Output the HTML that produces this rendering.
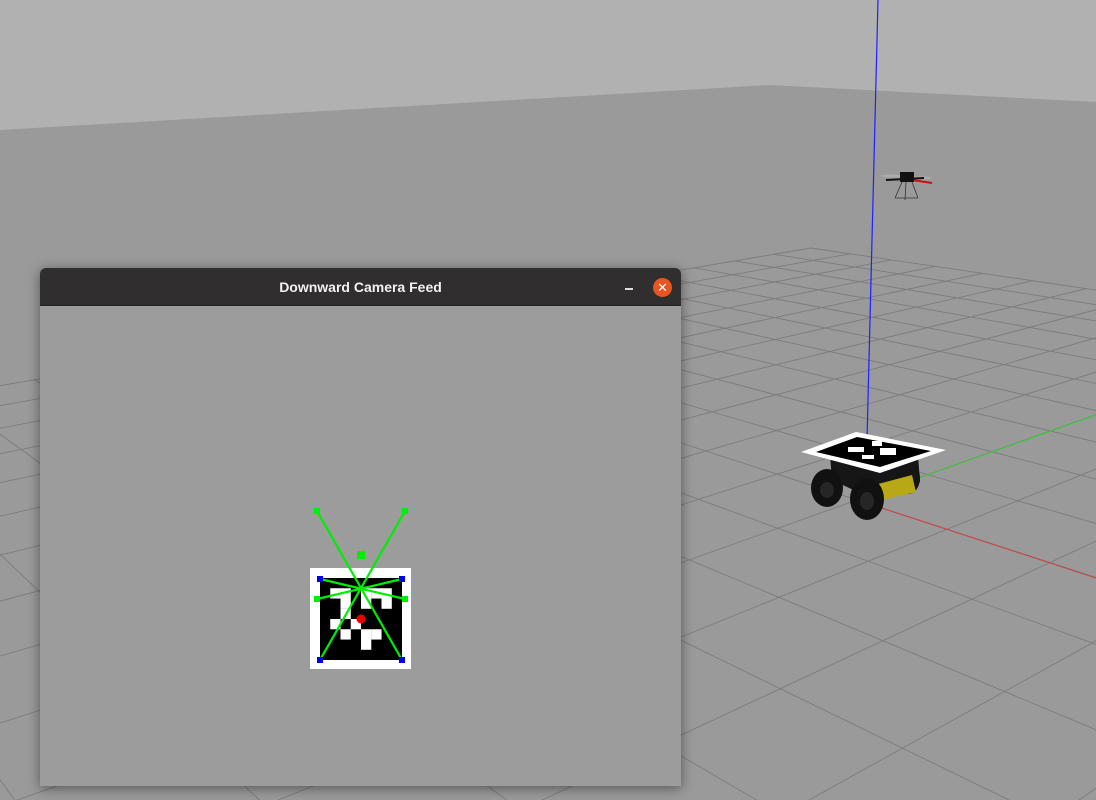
<!DOCTYPE html>
<html><head><meta charset="utf-8"><style>
html,body{margin:0;padding:0;width:1096px;height:800px;overflow:hidden;background:#9a9a9a;font-family:"Liberation Sans",sans-serif}
#scene{position:absolute;left:0;top:0}
#win{position:absolute;left:40px;top:268px;width:641px;height:518px;background:#9c9c9c;box-shadow:0 2px 12px rgba(0,0,0,.45);border-radius:6px 6px 0 0;overflow:hidden}
#tb{height:37px;background:#302e2e;border-bottom:1px solid #242222;color:#f2f2f2;font-weight:bold;font-size:14px;text-align:center;line-height:38px;position:relative}
#min{position:absolute;left:585px;top:20px;width:8px;height:1.5px;background:#ddd}
#cls{position:absolute;left:613px;top:10px;width:19px;height:19px;border-radius:50%;background:#e95420;color:#fff;font-size:13px;line-height:19px;text-align:center;font-weight:normal}
</style></head><body>
<svg id="scene" width="1096" height="800">
<polygon points="0,0 1096,0 1096,102 770,85 0,130" fill="#b1b1b1"/>
<g id="grid" stroke="#7c7c7c" stroke-width="0.9" fill="none"></g>
<line x1="857" y1="500" x2="1096" y2="578" stroke="#d04040" stroke-width="1"/>
<line x1="857" y1="500" x2="1096" y2="415" stroke="#30d030" stroke-width="1"/>
<line x1="878" y1="0" x2="867" y2="440" stroke="#2020ff" stroke-width="1.2"/>
<g>
<ellipse cx="893" cy="176" rx="12" ry="1.5" fill="#bbb" opacity=".6"/>
<ellipse cx="920" cy="178" rx="12" ry="1.5" fill="#bbb" opacity=".6"/>
<line x1="886" y1="180" x2="924" y2="178" stroke="#111" stroke-width="2"/>
<line x1="912" y1="180" x2="932" y2="183" stroke="#d01010" stroke-width="2"/>
<rect x="900" y="172" width="14" height="10" fill="#111"/>
<path d="M902 182 L895 198 M912 182 L918 198 M906 182 L905 200 M895 198 L918 198" stroke="#333" stroke-width=".8"/>
</g>
<g>
<polygon points="830,455 880,468 918,455 920,482 875,500 832,480" fill="#161616"/>
<ellipse cx="908" cy="478" rx="12" ry="16" fill="#151515"/>
<polygon points="878,484 912,475 916,492 882,500" fill="#b8a816"/>
<ellipse cx="827" cy="488" rx="16" ry="19" fill="#111"/>
<ellipse cx="867" cy="499" rx="17" ry="21" fill="#111"/>
<ellipse cx="827" cy="490" rx="7" ry="8" fill="#262626"/>
<ellipse cx="867" cy="501" rx="7" ry="9" fill="#262626"/>
<polygon points="801,452 856,432 946,450 880,473" fill="#fff"/>
<polygon points="816,452 857,437 931,451 880,467" fill="#000"/>
<rect x="848" y="447" width="16" height="5" fill="#fff"/>
<rect x="872" y="441" width="10" height="5" fill="#fff"/>
<rect x="880" y="448" width="16" height="7" fill="#fff"/>
<rect x="862" y="455" width="12" height="4" fill="#fff"/>
</g>
</svg>
<div id="win">
<div id="tb">Downward Camera Feed<div id="min"></div><div id="cls">✕</div></div>
<svg width="641" height="480" style="position:absolute;left:0;top:38px">
<g transform="translate(-40,-306)">
<rect x="310" y="568" width="101" height="101" fill="#fff"/>
<rect x="320" y="578" width="82" height="82" fill="#000"/>
<g fill="#fff" id="cells"></g>
<g stroke="#00ee00" stroke-width="2.2">
<line x1="317" y1="511" x2="402" y2="660"/>
<line x1="405" y1="511" x2="320" y2="660"/>
<line x1="317" y1="599" x2="402" y2="579"/>
<line x1="320" y1="579" x2="405" y2="599"/>
</g>
<g fill="#00ee00"><rect x="314" y="508" width="6" height="6"/><rect x="402" y="508" width="6" height="6"/><rect x="314" y="596" width="6" height="6"/><rect x="402" y="596" width="6" height="6"/><rect x="357" y="551" width="8" height="8"/></g>
<g fill="#0000ee"><rect x="317" y="576" width="6" height="6"/><rect x="399" y="576" width="6" height="6"/><rect x="317" y="657" width="6" height="6"/><rect x="399" y="657" width="6" height="6"/></g>
<circle cx="361" cy="619" r="4.5" fill="#ee0000"/>
</g></svg>
</div>
<script>
(function(){
var O=[857,500],VL=[-532,50],VR=[2242,5],a=-0.061,b=0.054;
function P(X,Y){var w=1+a*X+b*Y;return [(O[0]+a*X*VL[0]+b*Y*VR[0])/w,(O[1]+a*X*VL[1]+b*Y*VR[1])/w,w];}
var g=document.getElementById('grid'),s='';
function seg(f){
 var t0=-10,t1=10,p0=f(t0),p1=f(t1),m=0.03;
 if(p0[2]<m&&p1[2]<m)return;
 if(p0[2]<m){t0=t0+(t1-t0)*(m-p0[2])/(p1[2]-p0[2]);}
 else if(p1[2]<m){t1=t0+(t1-t0)*(m-p0[2])/(p1[2]-p0[2]);}
 var A=f(t0),B=f(t1);
 s+='<line x1="'+A[0].toFixed(1)+'" y1="'+A[1].toFixed(1)+'" x2="'+B[0].toFixed(1)+'" y2="'+B[1].toFixed(1)+'"/>';
}
for(var k=-10;k<=10;k++){(function(k){seg(function(t){return P(k,t)});seg(function(t){return P(t,k)});})(k);}
g.innerHTML=s;
var pat=["110111","010101","010000","101000","010110","000100"],c='';
for(var r=0;r<6;r++)for(var q=0;q<6;q++)if(pat[r][q]=='1')c+='<rect x="'+(330.25+q*10.25)+'" y="'+(588.25+r*10.25)+'" width="10.3" height="10.3"/>';
document.getElementById('cells').innerHTML=c;
})();
</script>
</body></html>
